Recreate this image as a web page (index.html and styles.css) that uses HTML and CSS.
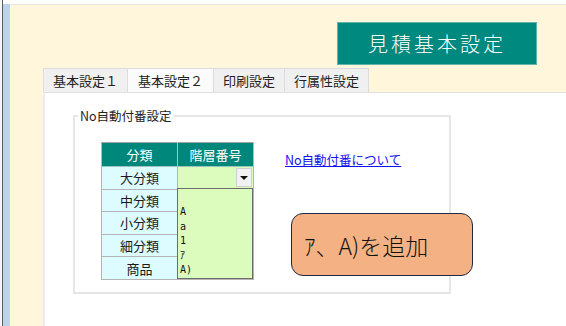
FILE: index.html
```html
<!DOCTYPE html>
<html lang="ja">
<head>
<meta charset="UTF-8">
<meta name="viewport" content="width=device-width, initial-scale=1.0">
<title>見積基本設定</title>
<link rel="stylesheet" href="styles.css">
</head>
<body>
<div class="app">
    <div class="edge"></div>
    <div class="rule"></div>
    <div class="strip"></div>
    <div class="main">
        <header class="head">
            <h1 class="title">見積基本設定</h1>
        </header>
        <nav class="tabs">
            <div class="tab">基本設定１</div>
            <div class="tab active">基本設定２</div>
            <div class="tab">印刷設定</div>
            <div class="tab">行属性設定</div>
        </nav>
        <section class="panel">
            <fieldset class="group">
                <legend>No自動付番設定</legend>
                <div class="group-body">
                    <div class="grid-wrap">
                        <table class="levels">
                            <tr>
                                <th>分類</th>
                                <th>階層番号</th>
                            </tr>
                            <tr>
                                <td class="name">大分類</td>
                                <td class="combo"><span class="drop-btn"><i class="caret"></i></span></td>
                            </tr>
                            <tr>
                                <td class="name">中分類</td>
                                <td class="combo"></td>
                            </tr>
                            <tr>
                                <td class="name">小分類</td>
                                <td class="combo"></td>
                            </tr>
                            <tr>
                                <td class="name">細分類</td>
                                <td class="combo"></td>
                            </tr>
                            <tr>
                                <td class="name">商品</td>
                                <td class="combo"></td>
                            </tr>
                        </table>
                        <!-- open list of the combo box -->
                        <ul class="dropdown">
                            <li>&nbsp;</li>
                            <li>A</li>
                            <li>a</li>
                            <li>1</li>
                            <li>ｱ</li>
                            <li>A)</li>
                        </ul>
                    </div>
                    <a class="help" href="#">No自動付番について</a>
                </div>
            </fieldset>
        </section>
    </div>
    <div class="callout">ｱ、A)を追加</div>
</div>
</body>
</html>
```

FILE: styles.css
```css
body {
    margin: 0;
    background: #fff;
    font-family: "Noto Sans CJK JP", "Noto Sans", sans-serif;
    color: #1a1a1a;
}

.app {
    position: relative;
    display: flex;
    width: 566px;
    height: 326px;
    overflow: hidden;
}

.edge {
    width: 2px;
    background: #f7f7f7;
}

.rule {
    width: 1px;
    background: #5c5c5c;
}

.strip {
    width: 7px;
    margin-top: 4px;
    background: #bdd3ec;
}

.main {
    flex: 1;
    display: flex;
    flex-direction: column;
    margin-top: 4px;
    border-top: 1px solid #e6e6e6;
    background: #fff6dc;
}

/*------------------ Title ---------------------- */
.head {
    display: flex;
    justify-content: flex-end;
    padding: 17px 29px 0 0;
}

.title {
    margin: 0;
    width: 200px;
    height: 43px;
    box-sizing: border-box;
    display: flex;
    align-items: center;
    justify-content: center;
    border: 1px solid #5fb3a9;
    background: #00897e;
    color: #fff;
    font-size: 20px;
    font-weight: 300;
    letter-spacing: 3px;
}

/*------------------ Tabs ---------------------- */
.tabs {
    display: flex;
    margin-top: 3px;
    padding-left: 33px;
    height: 24px;
}

.tab {
    padding: 0 9px;
    font-size: 13px;
    line-height: 23px;
    background: #f0f0f0;
    border: 1px solid #dcdcdc;
    border-bottom: none;
    color: #222;
}

.tab + .tab {
    border-left: none;
}

.tab.active {
    padding: 0 10px;
    background: #fbfbfb;
}

/*------------------ Panel ---------------------- */
.panel {
    flex: 1;
    margin-left: 33px;
    padding: 14px 0 0 28px;
    background: #fff;
    border-top: 1px solid #e0e0e0;
    border-left: 2px solid #ececec;
}

.group {
    width: 378px;
    box-sizing: border-box;
    margin: 0;
    padding: 0 0 0 26px;
    border: 2px solid #e6e6e6;
}

.group legend {
    margin-left: -23px;
    padding: 0 2px;
    font-size: 12.5px;
    line-height: 18px;
    color: #222;
}

.group-body {
    display: flex;
    align-items: flex-start;
    gap: 31px;
    height: 167px;
    padding-top: 17px;
    box-sizing: border-box;
}

/*------------------ Grid ---------------------- */
.grid-wrap {
    position: relative;
}

.levels {
    border-collapse: collapse;
    border: 1px solid #a4a4a4;
    font-size: 13px;
}

.levels th {
    width: 75px;
    height: 23px;
    padding: 0;
    background: #00877c;
    color: #fff;
    font-weight: normal;
    border: 1px solid #9cc4c0;
    border-top-color: #a4a4a4;
}

.levels td {
    height: 21.6px;
    padding: 0;
    border: 1px solid #b4b4b4;
    text-align: center;
}

.levels .name {
    background: #ddfcff;
}

.levels .combo {
    position: relative;
    background: #dbfcbd;
}

.drop-btn {
    position: absolute;
    right: 1px;
    top: 1px;
    width: 16px;
    height: 19px;
    display: flex;
    align-items: center;
    justify-content: center;
    background: #f2f2f2;
    border: 1px solid #d0d0d0;
    box-sizing: border-box;
}

.caret {
    width: 0;
    height: 0;
    border-left: 4px solid transparent;
    border-right: 4px solid transparent;
    border-top: 4px solid #111;
}

.dropdown {
    position: absolute;
    left: 76px;
    top: 46px;
    width: 76px;
    height: 91px;
    box-sizing: border-box;
    margin: 0;
    padding: 2px 0 0 2px;
    list-style: none;
    background: #dbfcbd;
    border: 1px solid #6c6c6c;
    font-family: "DejaVu Sans Mono", "Noto Sans CJK JP", monospace;
    font-size: 10px;
    line-height: 14.4px;
    color: #111;
}

.help {
    margin-top: 8px;
    font-size: 12.5px;
    color: #1010f0;
    text-decoration: underline;
}

/*------------------ Callout ---------------------- */
.callout {
    position: absolute;
    left: 291px;
    top: 213px;
    width: 182px;
    height: 63px;
    box-sizing: border-box;
    display: flex;
    align-items: center;
    padding-left: 12px;
    background: #f4b183;
    border: 1px solid #1f2a44;
    border-radius: 12px;
    font-size: 23px;
    font-weight: 300;
    color: #111;
}
```
